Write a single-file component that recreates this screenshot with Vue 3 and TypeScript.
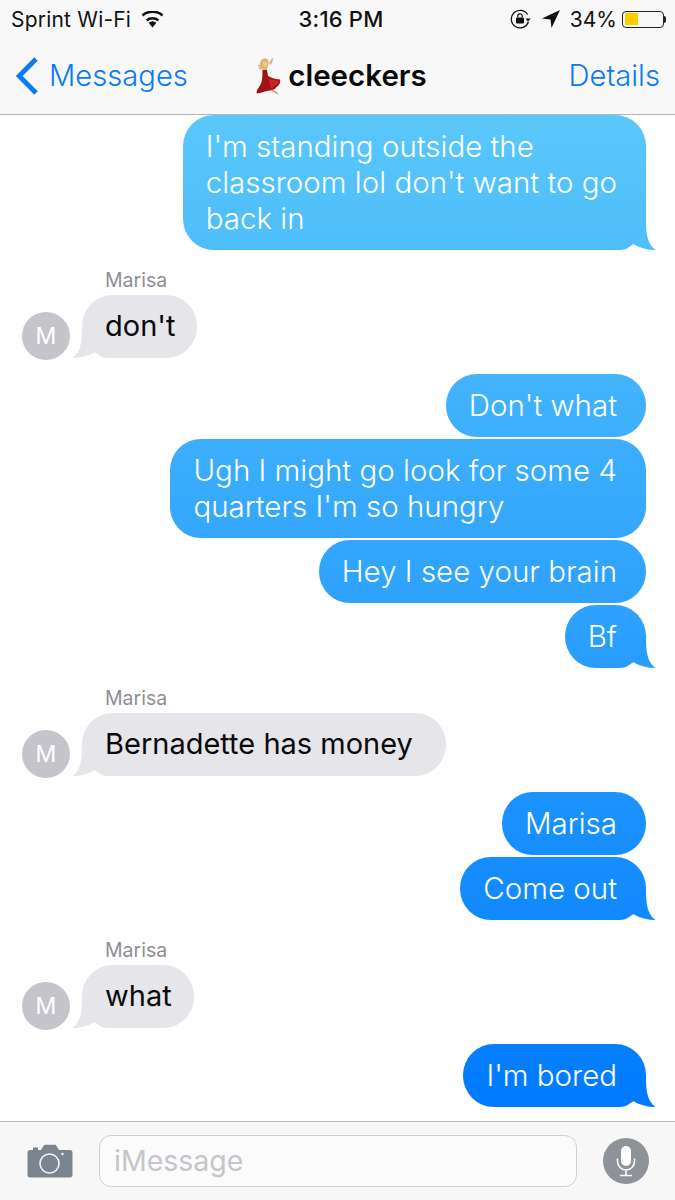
<script setup lang="ts">
type Msg = { id: number; side: 'in' | 'out'; text: string; tail?: boolean; name?: string; first?: boolean }

const messages: Msg[] = [
  { id: 1, side: 'out', text: "I'm standing outside the\nclassroom lol don't want to go\nback in", tail: true },
  { id: 2, side: 'in', text: "don't", tail: true, name: 'Marisa' },
  { id: 3, side: 'out', text: "Don't what", first: true },
  { id: 4, side: 'out', text: "Ugh I might go look for some 4\nquarters I'm so hungry" },
  { id: 5, side: 'out', text: 'Hey I see your brain' },
  { id: 6, side: 'out', text: 'Bf', tail: true },
  { id: 7, side: 'in', text: 'Bernadette has money \u200a', tail: true, name: 'Marisa' },
  { id: 8, side: 'out', text: 'Marisa', first: true },
  { id: 9, side: 'out', text: 'Come out', tail: true },
  { id: 10, side: 'in', text: 'what', tail: true, name: 'Marisa' },
  { id: 11, side: 'out', text: "I'm bored", tail: true, first: true },
]
</script>

<template>
  <div class="phone">
    <header class="top">
      <div class="status">
        <div class="status-left">
          <span>Sprint Wi-Fi</span>
          <svg class="wifi" width="23" height="17" viewBox="0 0 23 17">
            <path d="M11.500 16.500 7.600 11.800a6 6 0 0 1 7.800 0Z" fill="#111" />
            <path d="M4.800 8.400a10.400 10.400 0 0 1 13.400 0l-1.600 1.900a8 8 0 0 0-10.200 0Z" fill="#111" />
            <path d="M.6 3.400a17 17 0 0 1 21.800 0l-1.700 2a14.400 14.400 0 0 0-18.400 0Z" fill="#111" />
          </svg>
        </div>
        <div class="clock">3:16 PM</div>
        <div class="status-right">
          <svg width="22" height="20" viewBox="0 0 22 20">
            <path d="M17.600 5.500A8.800 8.800 0 1 0 18.400 13" fill="none" stroke="#111" stroke-width="1.300" />
            <path d="M15.600 9.500h5l-2.500 3.200Z" fill="#111" />
            <rect x="6" y="8.600" width="8" height="6" rx="1" fill="#111" />
            <path d="M7.800 8.600V7a2.200 2.200 0 0 1 4.400 0v1.600" fill="none" stroke="#111" stroke-width="1.200" />
          </svg>
          <svg class="arrow" width="18" height="18" viewBox="0 0 17 17">
            <path d="M17 0 0 8l8 1 1 8Z" fill="#111" />
          </svg>
          <span class="pct">34%</span>
          <div class="battery">
            <div class="battery-level"></div>
          </div>
          <div class="battery-nub"></div>
        </div>
      </div>
      <nav class="nav">
        <div class="back">
          <svg width="24" height="40" viewBox="0 0 24 40">
            <path d="M21 3 4.200 20 21 37" fill="none" stroke="#0b7bf5" stroke-width="4.800" />
          </svg>
          <span class="nav-text">Messages</span>
        </div>
        <div class="title">
          <svg class="dancer" width="26" height="38" viewBox="0 0 26 38">
            <path d="M13 6 16 1l1.400.7-2.200 6.300Z" fill="#e2b083" />
            <path d="M5.500 11 3 7.500 2 8l2 5.500Z" fill="#e2b083" />
            <path d="M3.800 7.500C4 3.500 8-.2 11 2c2.500 2 2 6 .5 8-.5 2.500-1 4-2 5-2.500-.5-4.500-3.500-5.700-7.500Z" fill="#dcb768" />
            <circle cx="9" cy="7" r="2.400" fill="#eec49a" />
            <path d="M6.500 13h4.500l1 6c2.500 1.500 6.500 3 12 3.500.8 3-1 6.500-3.500 7.500-1 2-4 3.500-7 3.500C10 34 5 36 .8 36.500c-.8-3 1.700-5.500 3.500-8.500 1.700-3 2.200-7 2.200-15Z" fill="#9e1218" />
            <path d="M12 21c3 2 7 2.500 11 2.500-.3 2.500-2 4.500-4 5-1.500-.5-1 2.500-4 3.500-.5-4-1.500-7-3-11Z" fill="#c9242a" />
            <path d="M16 32.500l4.500 2.500 1.500.8-.4 1.500-6.800-3.500Z" fill="#cf9570" />
          </svg>
          <span class="nav-text">cleeckers</span>
        </div>
        <div class="details nav-text">Details</div>
      </nav>
    </header>

    <main class="thread">
      <div
        v-for="m in messages"
        :key="m.id"
        class="row"
        :class="[m.side, { first: m.first, named: m.name }]"
      >
        <div v-if="m.name" class="name">{{ m.name }}</div>
        <div class="line">
          <div v-if="m.side === 'in'" class="avatar">M</div>
          <div class="bubble" :class="{ tail: m.tail }">{{ m.text }}</div>
        </div>
      </div>
    </main>

    <footer class="composer">
      <svg class="camera" width="46" height="34" viewBox="0 0 46 34">
        <path d="M3 6h3V3.500h5V6h3l2.500-4c.4-.8 1-1.200 2-1.200h9c1 0 1.600.4 2 1.200L32 6h11c1.500 0 2.500 1 2.500 2.500V31c0 1.500-1 2.500-2.500 2.500H3C1.500 33.500.5 32.500.5 31V8.500C.5 7 1.500 6 3 6Z" fill="#7b8590" />
        <circle cx="22.500" cy="19.500" r="9.500" fill="none" stroke="#f4f4f6" stroke-width="1.600" />
        <circle cx="35.500" cy="10" r="1.200" fill="#f4f4f6" />
      </svg>
      <div class="input">iMessage</div>
      <div class="mic">
        <svg width="22" height="32" viewBox="0 0 22 32">
          <rect x="6" y="1" width="10" height="20" rx="5" fill="#fff" />
          <path d="M2.500 13.500v3a8.500 8.500 0 0 0 17 0v-3M11 25v5M5 30.500h12" fill="none" stroke="#fff" stroke-width="1.500" />
        </svg>
      </div>
    </footer>
  </div>
</template>

<style>
html,
body {
  margin: 0;
  background: #fff;
}
</style>

<style scoped>
.phone {
  width: 675px;
  height: 1200px;
  display: flex;
  flex-direction: column;
  overflow: hidden;
  background: #fff;
  font-family: Inter, "Liberation Sans", sans-serif;
}

.top {
  height: 115px;
  flex: none;
  box-sizing: border-box;
  background: #f8f8f9;
  border-bottom: 1px solid #b4b4b6;
  z-index: 1;
}

.status {
  display: grid;
  grid-template-columns: 1fr auto 1fr;
  align-items: center;
  height: 38px;
  padding: 0 9px 0 11px;
  font-size: 21px;
  color: #111;
}

.status-left {
  display: flex;
  align-items: center;
  gap: 10px;
  letter-spacing: 0.2px;
}

.clock {
  font-size: 22px;
  font-weight: 500;
  letter-spacing: 0.2px;
  margin-left: 5px;
}

.status-right {
  display: flex;
  align-items: center;
  justify-content: flex-end;
}

.arrow {
  margin-left: 10px;
}

.pct {
  margin-left: 10px;
  margin-right: 5px;
}

.battery {
  box-sizing: border-box;
  width: 42px;
  height: 17px;
  border: 1px solid #222;
  border-radius: 4px;
  padding: 1.5px;
}

.battery-level {
  width: 13px;
  height: 100%;
  background: #ffcc00;
}

.battery-nub {
  width: 2px;
  height: 7px;
  background: #222;
  border-radius: 0 2px 2px 0;
}

.nav {
  display: grid;
  grid-template-columns: 1fr auto 1fr;
  align-items: center;
  height: 76px;
  padding: 0 15px;
  font-size: 29.2px;
  color: #0b7bf5;
  font-weight: 350;
}

.nav-text {
  position: relative;
  top: -1px;
}

.back {
  display: flex;
  align-items: center;
  gap: 10px;
}

.title {
  display: flex;
  align-items: center;
  gap: 6px;
  margin-left: 8px;
  font-size: 29.5px;
  font-weight: 600;
  color: #0a0a0a;
}

.details {
  justify-self: end;
}

.thread {
  flex: 1;
  min-height: 0;
  overflow: hidden;
  display: flex;
  flex-direction: column;
  gap: 2px;
}

.row {
  display: flex;
  flex-direction: column;
}

.row.out {
  align-items: flex-end;
  padding-right: 29px;
}

.row.in {
  align-items: flex-start;
  padding-left: 22px;
}

.row.first {
  margin-top: 14px;
}

.row.named {
  margin-top: 16px;
}

.name {
  height: 22px;
  margin: 0 0 5px 83px;
  font-size: 19.5px;
  line-height: 24px;
  color: #8e8e93;
}

.line {
  display: flex;
  align-items: flex-end;
}

.avatar {
  width: 48px;
  height: 48px;
  flex: none;
  margin: 0 12px -2px 0;
  border-radius: 50%;
  background: #c4c4ca;
  color: #fff;
  font-size: 23px;
  line-height: 48px;
  text-align: center;
}

.bubble {
  position: relative;
  isolation: isolate;
  padding: 13px 29px 14px 23px;
  border-radius: 31px;
  font-size: 29px;
  line-height: 36px;
  white-space: pre;
}

.out .bubble {
  color: #fff;
  font-size: 29.5px;
  font-weight: 350;
  background: linear-gradient(#5ac8fa 115px, #007aff 1107px) fixed;
}

.in .bubble {
  padding-right: 22px;
  color: #0a0a0a;
  background: #e5e5ea;
}

.bubble.tail::after {
  content: "";
  position: absolute;
  z-index: -1;
  bottom: 0;
  width: 40px;
  height: 31px;
  background: inherit;
  clip-path: path("M10 0H30C30 14 31 25 39.500 31C32 31 24 29 17 25C13 28 10 31 4 31H0V0Z");
}

.out .bubble.tail::after {
  right: -10px;
}

.in .bubble.tail::after {
  left: -10px;
  transform: scaleX(-1);
}

.composer {
  height: 79px;
  flex: none;
  box-sizing: border-box;
  display: flex;
  align-items: center;
  padding: 0 26px 0 27px;
  background: #f7f7f8;
  border-top: 1px solid #b8b8ba;
}

.camera {
  flex: none;
}

.input {
  box-sizing: border-box;
  flex: 1;
  height: 52px;
  margin: 0 26px;
  padding-left: 14px;
  border: 1px solid #cfcfd4;
  border-radius: 12px;
  background: #fbfbfc;
  color: #c5c5ca;
  font-size: 28.5px;
  line-height: 50px;
}

.mic {
  width: 46px;
  height: 46px;
  flex: none;
  display: flex;
  align-items: center;
  justify-content: center;
  border-radius: 50%;
  background: #8e9299;
}
</style>
